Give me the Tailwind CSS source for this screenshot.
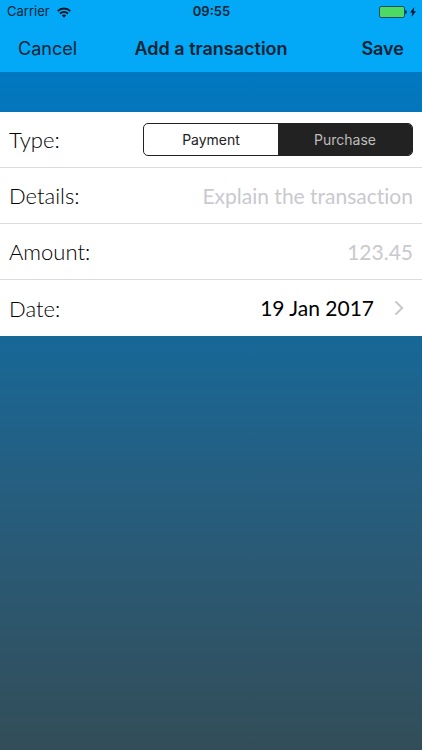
<!DOCTYPE html>
<html lang="en">
<head>
  <meta charset="UTF-8" />
  <meta name="viewport" content="width=device-width, initial-scale=1.0" />
  <title>Add a transaction</title>
  <script src="https://cdn.jsdelivr.net/npm/@tailwindcss/browser@4"></script>
</head>
<body class="min-h-screen flex flex-col bg-[#324d58] font-['Inter',sans-serif] text-[#0b2433]">
  <!-- Header -->
  <header class="bg-[#03a9f7]">
    <div class="grid grid-cols-3 items-center h-6 pl-[7px] pr-[6px] text-[13px]">
      <div class="flex items-center gap-[7px]">
        <span>Carrier</span>
        <svg class="w-[14px] h-[11px]" viewBox="0 0 14 11" fill="none" stroke="#04141f" stroke-width="1.9">
          <path d="M0.7 4.1a8.9 8.9 0 0 1 12.6 0" />
          <path d="M3 6.6a5.7 5.7 0 0 1 8 0" />
          <path d="M7 10.8 4.8 8.6a3.1 3.1 0 0 1 4.4 0z" fill="#04141f" stroke="none" />
        </svg>
      </div>
      <span class="text-center font-semibold">09:55</span>
      <div class="flex items-center justify-end gap-[3px]">
        <svg class="w-7 h-3" viewBox="0 0 28 12">
          <rect x="0.5" y="0.5" width="25" height="11" rx="1.5" fill="#4cd964" stroke="#12506b" />
          <path d="M26.3 4v4c2-.6 2-3.4 0-4z" fill="#04141f" />
        </svg>
        <svg class="w-[6px] h-[10px]" viewBox="0 0 6 10">
          <path d="M4.4 0 0 5.6h2.4L1.4 10 6 4.2H3.5z" fill="#04141f" />
        </svg>
      </div>
    </div>
    <nav class="grid grid-cols-[1fr_auto_1fr] items-center h-12 px-[18px] text-[18px]">
      <button type="button" class="justify-self-start">Cancel</button>
      <h1 class="font-semibold">Add a transaction</h1>
      <button type="submit" form="transactionForm" class="justify-self-end font-semibold">Save</button>
    </nav>
  </header>

  <!-- Transaction form -->
  <main class="flex-1 pt-10 bg-linear-to-b from-[#0078c1] via-[#176796] via-40% to-[#324d58]">
    <form id="transactionForm" class="bg-white text-black font-['Lato',sans-serif] text-[21px] [font-variant-ligatures:none]">
      <div role="radiogroup" aria-labelledby="typeLabel" class="flex items-center justify-between h-14 px-[9px] border-b border-[#dcdcdf]">
        <span id="typeLabel" class="text-[22px] font-light">Type:</span>
        <div class="flex w-[270px] h-[33px] border border-[#222] rounded-[5px] overflow-hidden font-['Inter',sans-serif] text-[14px]">
          <label class="flex-1 flex items-center justify-center text-[#222] has-checked:bg-[#222] has-checked:text-[#bdbdbd]">
            <input type="radio" name="type" value="payment" class="sr-only">Payment
          </label>
          <label class="flex-1 flex items-center justify-center text-[#222] has-checked:bg-[#222] has-checked:text-[#bdbdbd]">
            <input type="radio" name="type" value="purchase" class="sr-only" checked>Purchase
          </label>
        </div>
      </div>
      <div class="flex items-center h-14 px-[9px] border-b border-[#dcdcdf]">
        <label for="details" class="text-[22px] font-light">Details:</label>
        <input type="text" id="details" class="flex-1 min-w-0 text-right outline-none placeholder:text-[#c9c9ce]" placeholder="Explain the transaction">
      </div>
      <div class="flex items-center h-14 px-[9px] border-b border-[#dcdcdf]">
        <label for="amount" class="text-[22px] font-light">Amount:</label>
        <input type="text" id="amount" inputmode="decimal" class="flex-1 min-w-0 text-right outline-none placeholder:text-[#c9c9ce]" placeholder="123.45">
      </div>
      <div class="flex items-center justify-between h-14 pl-[9px] pr-[18px]">
        <span id="dateLabel" class="text-[22px] font-light">Date:</span>
        <button type="button" aria-labelledby="dateLabel dateValue" class="flex items-center gap-5">
          <span id="dateValue">19 Jan 2017</span>
          <svg class="w-[10px] h-4" viewBox="0 0 10 16" fill="none" stroke="#c7c7cc" stroke-width="2">
            <path d="M1.5 1.5 8.2 8l-6.7 6.5" />
          </svg>
        </button>
      </div>
    </form>
  </main>
</body>
</html>
